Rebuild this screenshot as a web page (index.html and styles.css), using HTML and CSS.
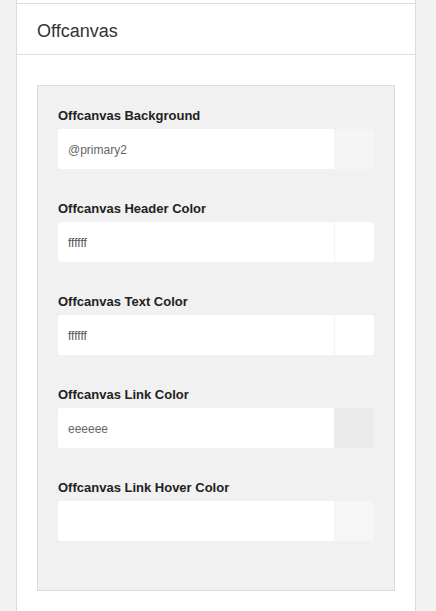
FILE: index.html
```html
<!DOCTYPE html>
<html>
<head>
<meta charset="utf-8">
<link rel="stylesheet" href="styles.css">
</head>
<body>
<div class="card">
  <div class="prev"></div>
  <div class="card-header">Offcanvas</div>
  <div class="card-body">
    <div class="panel">
      <div class="group">
        <label class="label">Offcanvas Background</label>
        <div class="field">
          <div class="input">@primary2</div>
          <div class="swatch sw-primary"></div>
        </div>
      </div>
      <div class="group">
        <label class="label">Offcanvas Header Color</label>
        <div class="field">
          <div class="input dark">ffffff</div>
          <div class="swatch sw-white"></div>
        </div>
      </div>
      <div class="group">
        <label class="label">Offcanvas Text Color</label>
        <div class="field">
          <div class="input dark">ffffff</div>
          <div class="swatch sw-white"></div>
        </div>
      </div>
      <div class="group">
        <label class="label">Offcanvas Link Color</label>
        <div class="field">
          <div class="input">eeeeee</div>
          <div class="swatch sw-eee"></div>
        </div>
      </div>
      <div class="group">
        <label class="label">Offcanvas Link Hover Color</label>
        <div class="field">
          <div class="input"></div>
          <div class="swatch sw-empty"></div>
        </div>
      </div>
    </div>
  </div>
</div>
</body>
</html>
```
FILE: styles.css
```css
html, body {
  margin: 0;
  padding: 0;
}
body {
  background: #f2f2f2;
  font-family: "Liberation Sans", Arial, sans-serif;
  color: #333;
}
.card {
  margin-left: 16px;
  width: 398px;
  background: #fff;
  border-left: 1px solid #dcdcdc;
  border-right: 1px solid #dcdcdc;
  min-height: 611px;
}
.prev {
  height: 3px;
  border-bottom: 1px solid #dedede;
}
.card-header {
  height: 45px;
  padding-top: 5px;
  line-height: 45px;
  padding-left: 20px;
  font-size: 18px;
  color: #333;
  border-bottom: 1px solid #dedede;
}
.card-body {
  padding: 30px 20px 0 20px;
}
.panel {
  background: #f1f1f1;
  border: 1px solid #dcdcdc;
  padding: 19px 20px 20px 20px;
}
.group {
  margin-bottom: 29px;
}
.label {
  display: block;
  font-size: 13px;
  font-weight: bold;
  line-height: 18px;
  padding-top: 2px;
  color: #222;
  margin-bottom: 4px;
}
.field {
  display: flex;
  height: 40px;
}
.input {
  flex: 1;
  background: #fff;
  border-radius: 3px 0 0 3px;
  padding-left: 10px;
  padding-top: 2px;
  height: 38px;
  font-size: 12px;
  line-height: 38px;
  color: #666;
}
.input.dark {
  color: #555;
}
.swatch {
  width: 39px;
  border-left: 1px solid #f3f3f3;
  border-radius: 0 3px 3px 0;
}
.sw-primary { background: #f5f5f5; }
.sw-white { background: #fff; }
.sw-eee { background: #eaeaea; border-left-color: #eaeaea; }
.sw-empty { background: #f6f6f6; }
```
